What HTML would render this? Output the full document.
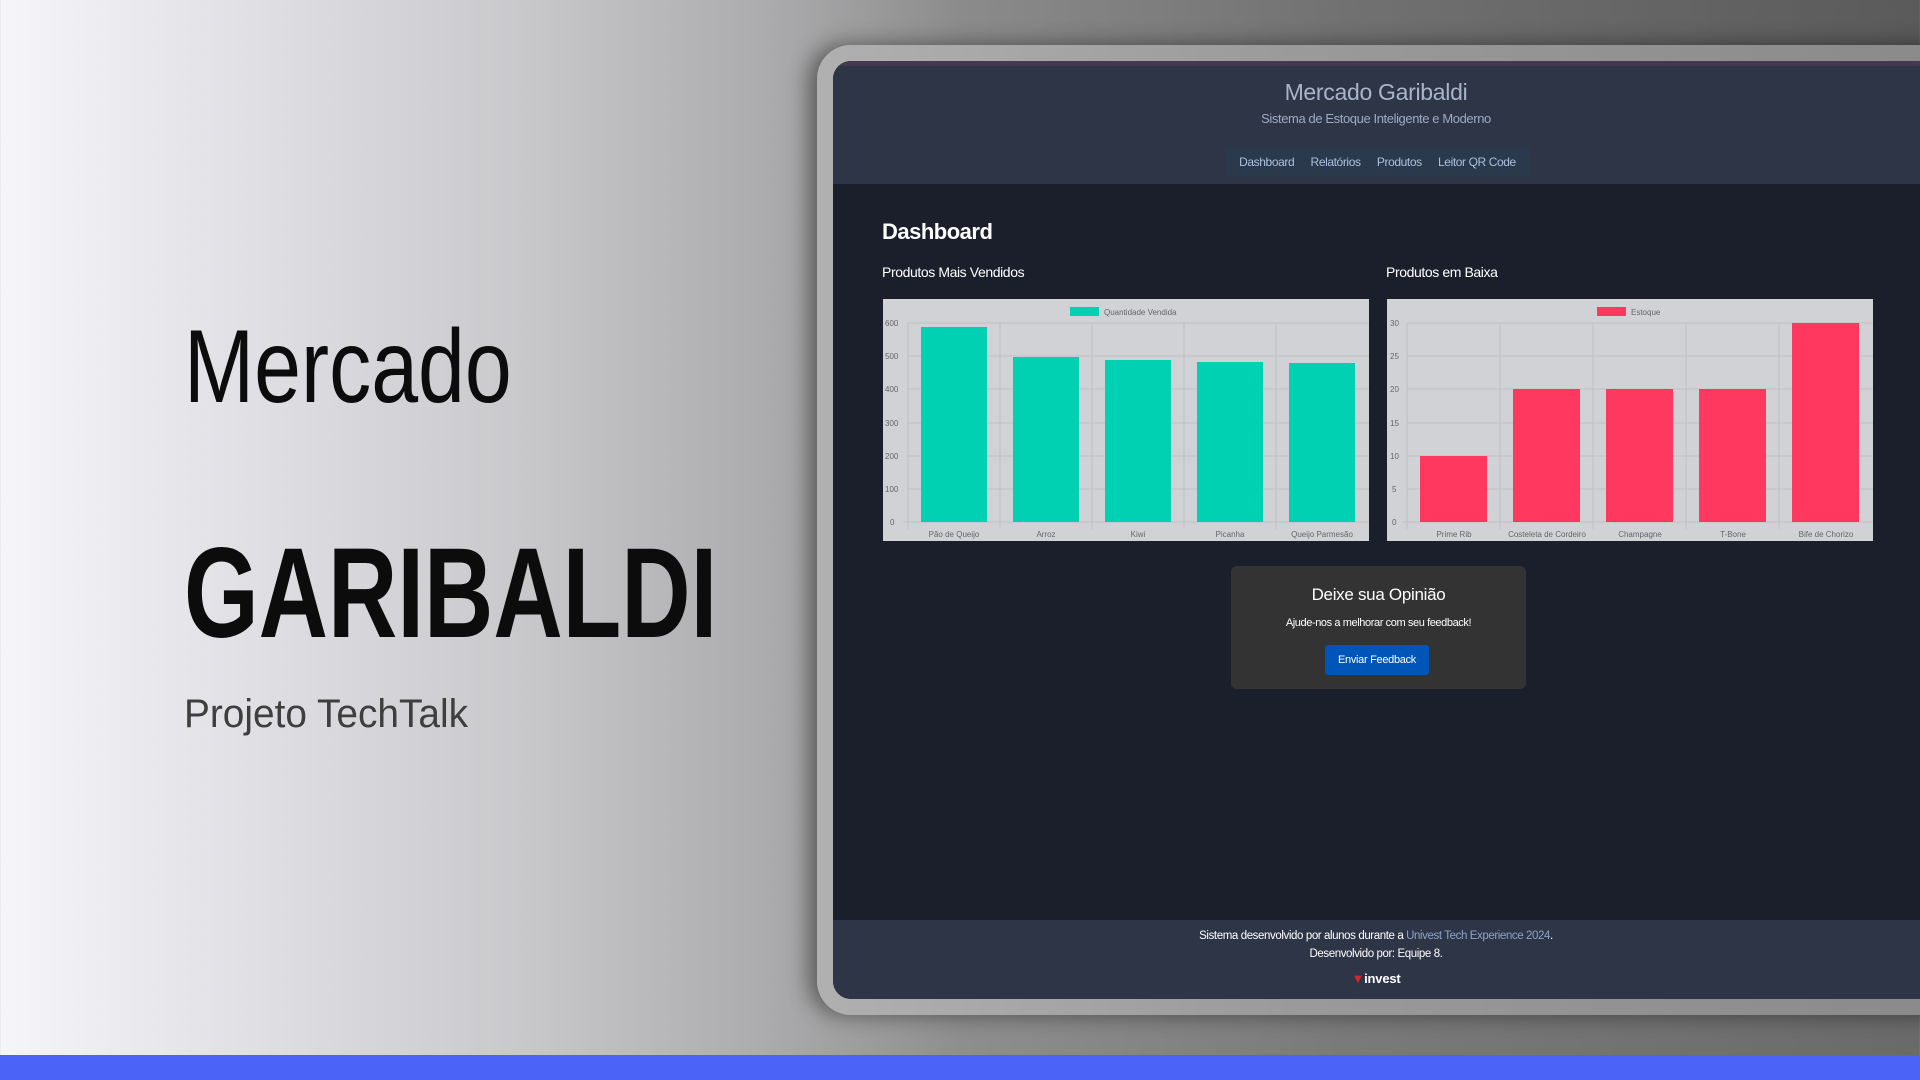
<!DOCTYPE html>
<html><head><meta charset="utf-8"><style>
*{margin:0;padding:0;box-sizing:border-box}
body{width:1920px;height:1080px;overflow:hidden;position:relative;font-family:"Liberation Sans",sans-serif;
background:linear-gradient(90deg,#f6f5f9 0%,#e2e1e6 12%,#c9c9cc 27%,#ababad 40%,#8e8e8e 50%,#7a7a7a 70%,#6a6a6a 100%)}
.topshade{position:absolute;left:800px;top:0;width:1120px;height:60px;background:linear-gradient(90deg,rgba(0,0,0,0),rgba(0,0,0,0.15))}
.l{position:absolute;left:184px;color:#0c0c0c;transform-origin:left top;white-space:nowrap}
.frame{position:absolute;left:817px;top:45px;width:1200px;height:970px;border-radius:34px;
background:linear-gradient(90deg,#b0b0b0,#9a9a9a 40%,#888 100%);box-shadow:-8px 0 22px rgba(0,0,0,0.45)}
.screen{position:absolute;left:833px;top:61px;width:1200px;height:938px;border-radius:18px;overflow:hidden;background:#1b1f2b}
.hdr{position:absolute;left:0;top:0;width:100%;height:123px;background:#2d3547;border-top:5px solid #433a52}
.t{position:absolute;width:1086px;text-align:center;left:0}
.nav{position:absolute;left:392px;top:82px;width:305px;height:28px;background:#2a394b;font-size:12px;color:#aac0df;display:flex;justify-content:space-around;align-items:center;padding:0 6px;letter-spacing:-0.4px}
.chart{position:absolute;top:238px;width:486px;height:242px;background:#d1d2d6}
.fb{position:absolute;left:398px;top:505px;width:295px;height:123px;background:#333;border-radius:6px;text-align:center;color:#fff}
.foot{position:absolute;left:0;top:859px;width:100%;height:80px;background:#2d3547;color:#fff;font-size:11.5px;letter-spacing:-0.4px}
.blue{position:absolute;left:0;top:1055px;width:1920px;height:25px;background:#4b63f6}
</style></head><body>
<div class="topshade"></div>
<div class="l" style="top:308px;font-size:104px;transform:scaleX(0.81)">Mercado</div>
<div class="l" style="top:520px;font-size:128px;font-weight:bold;transform:scaleX(0.75)">GARIBALDI</div>
<div class="l" style="top:692px;font-size:40px;color:#3e3e3e;transform:scaleX(0.97)">Projeto TechTalk</div>

<div class="frame"></div>
<div class="screen">
 <div class="hdr">
  <div class="t" style="top:13px;font-size:23px;color:#a9b5ca;letter-spacing:-0.3px">Mercado Garibaldi</div>
  <div class="t" style="top:45px;font-size:13px;color:#9eabc2;letter-spacing:-0.4px">Sistema de Estoque Inteligente e Moderno</div>
  <div class="nav"><span>Dashboard</span><span>Relatórios</span><span>Produtos</span><span>Leitor QR Code</span></div>
 </div>
 <div style="position:absolute;left:49px;top:158px;font-size:22px;font-weight:bold;color:#fff;letter-spacing:-0.5px">Dashboard</div>
 <div style="position:absolute;left:49px;top:203px;font-size:14px;color:#fff;letter-spacing:-0.4px">Produtos Mais Vendidos</div>
 <div style="position:absolute;left:553px;top:203px;font-size:14px;color:#fff;letter-spacing:-0.4px">Produtos em Baixa</div>

 <div class="chart" style="left:50px">
 <svg width="486" height="242" font-family="Liberation Sans" font-size="8" fill="#666">
  <rect x="187" y="8" width="29" height="9" fill="#00d1b2"/><text x="221" y="16">Quantidade Vendida</text>
  <g stroke="#bfc0c4" stroke-width="1">
   <line x1="25" y1="24" x2="486" y2="24"/><line x1="25" y1="57" x2="486" y2="57"/><line x1="25" y1="90" x2="486" y2="90"/><line x1="25" y1="124" x2="486" y2="124"/><line x1="25" y1="157" x2="486" y2="157"/><line x1="25" y1="190" x2="486" y2="190"/><line x1="20" y1="223" x2="486" y2="223"/>
   <line x1="25" y1="24" x2="25" y2="230"/><line x1="117" y1="24" x2="117" y2="230"/><line x1="209" y1="24" x2="209" y2="230"/><line x1="301" y1="24" x2="301" y2="230"/><line x1="393" y1="24" x2="393" y2="230"/>
  </g>
  <g fill="#00d1b2">
   <rect x="38" y="28" width="66" height="195"/><rect x="130" y="58" width="66" height="165"/><rect x="222" y="61" width="66" height="162"/><rect x="314" y="63" width="66" height="160"/><rect x="406" y="64" width="66" height="159"/>
  </g>
  <g text-anchor="start"><text x="2" y="27">600</text><text x="2" y="60">500</text><text x="2" y="93">400</text><text x="2" y="127">300</text><text x="2" y="160">200</text><text x="2" y="193">100</text><text x="7" y="226">0</text></g>
  <g text-anchor="middle"><text x="71" y="238">Pão de Queijo</text><text x="163" y="238">Arroz</text><text x="255" y="238">Kiwi</text><text x="347" y="238">Picanha</text><text x="439" y="238">Queijo Parmesão</text></g>
 </svg></div>

 <div class="chart" style="left:554px">
 <svg width="486" height="242" font-family="Liberation Sans" font-size="8" fill="#666">
  <rect x="210" y="8" width="29" height="9" fill="#ff3860"/><text x="244" y="16">Estoque</text>
  <g stroke="#bfc0c4" stroke-width="1">
   <line x1="20" y1="24" x2="486" y2="24"/><line x1="20" y1="57" x2="486" y2="57"/><line x1="20" y1="90" x2="486" y2="90"/><line x1="20" y1="124" x2="486" y2="124"/><line x1="20" y1="157" x2="486" y2="157"/><line x1="20" y1="190" x2="486" y2="190"/><line x1="15" y1="223" x2="486" y2="223"/>
   <line x1="20" y1="24" x2="20" y2="230"/><line x1="113" y1="24" x2="113" y2="230"/><line x1="206" y1="24" x2="206" y2="230"/><line x1="299" y1="24" x2="299" y2="230"/><line x1="392" y1="24" x2="392" y2="230"/>
  </g>
  <g fill="#ff3860">
   <rect x="33" y="157" width="67" height="66"/><rect x="126" y="90" width="67" height="133"/><rect x="219" y="90" width="67" height="133"/><rect x="312" y="90" width="67" height="133"/><rect x="405" y="24" width="67" height="199"/>
  </g>
  <g><text x="3" y="27">30</text><text x="3" y="60">25</text><text x="3" y="93">20</text><text x="3" y="127">15</text><text x="3" y="160">10</text><text x="5" y="193">5</text><text x="5" y="226">0</text></g>
  <g text-anchor="middle"><text x="67" y="238">Prime Rib</text><text x="160" y="238">Costeleta de Cordeiro</text><text x="253" y="238">Champagne</text><text x="346" y="238">T-Bone</text><text x="439" y="238">Bife de Chorizo</text></g>
 </svg></div>

 <div class="fb">
  <div style="position:absolute;top:19px;width:100%;font-size:17px;letter-spacing:-0.3px">Deixe sua Opinião</div>
  <div style="position:absolute;top:51px;width:100%;font-size:11px;letter-spacing:-0.4px">Ajude-nos a melhorar com seu feedback!</div>
  <div style="position:absolute;left:94px;top:79px;width:104px;height:30px;background:#0056b8;border-radius:3px;font-size:11px;line-height:30px;letter-spacing:-0.3px">Enviar Feedback</div>
 </div>

 <div class="foot">
  <div class="t" style="top:10px">Sistema desenvolvido por alunos durante a <span style="color:#8fa3c8">Univest Tech Experience 2024</span>.</div>
  <div class="t" style="top:28px">Desenvolvido por: Equipe 8.</div>
  <div class="t" style="top:51px;font-size:13px;font-weight:bold;letter-spacing:-0.2px"><span style="color:#d8232a">&#9660;</span>invest</div>
 </div>
</div>
<div class="blue"></div>
</body></html>
